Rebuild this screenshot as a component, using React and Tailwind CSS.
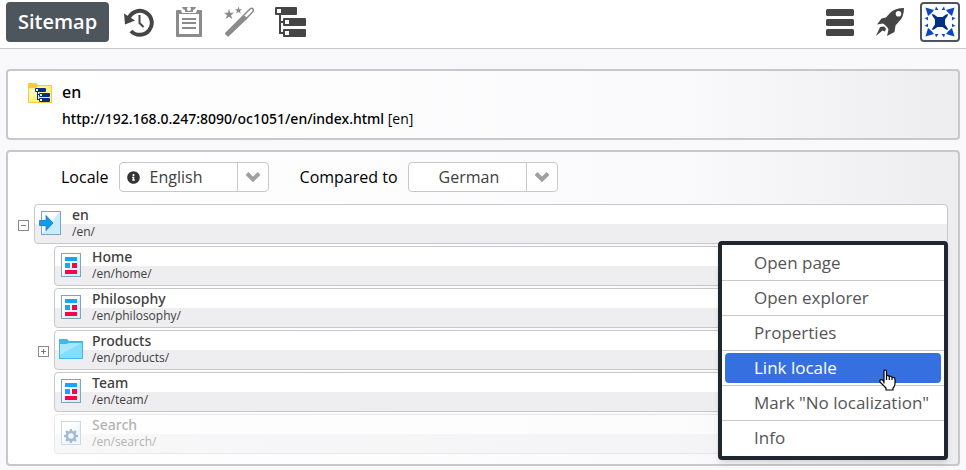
import React from "react";
import { FaInfoCircle } from "react-icons/fa";

function HistoryIcon() {
  return (
    <svg width="30" height="30" viewBox="0 0 30 30" aria-hidden="true">
      <path d="M4.600 11.500A12 12 0 1 1 7 24" fill="none" stroke="#454545" strokeWidth="4" />
      <path d="M0 6.500L11 13.500L1 17.500Z" fill="#454545" />
      <path d="M15.500 8V16L19.500 20" fill="none" stroke="#454545" strokeWidth="2" />
    </svg>
  );
}

function ClipboardIcon() {
  return (
    <svg width="28" height="30" viewBox="0 0 28 30" fill="#8b8b8b" aria-hidden="true">
      <path fillRule="evenodd" d="M2 3H26Q27 3 27 4V29Q27 30 26 30H2Q1 30 1 29V4Q1 3 2 3ZM4 7V27H24V7Z" />
      <path fill="#fff" d="M5 0H23L21 6H7Z" />
      <path d="M7 0H21L20 2L18 3V5H10V3L8 2Z" />
      <circle cx="14" cy="2" r="2" fill="#fff" />
      <path d="M7 11H21V13H7ZM7 15H21V17H7ZM7 20H21V22H7Z" />
    </svg>
  );
}

function WandIcon() {
  return (
    <svg width="30" height="30" viewBox="0 0 30 30" fill="#8b8b8b" aria-hidden="true">
      <path d="M1 26L19 8L23 12L5 29Q4 30 3 29L1 27Z" />
      <path d="M19.500 8.500L26 2Q27.500 0.500 29 2Q30 3.500 28.500 5L22.500 11.500Z" fill="none" stroke="#8b8b8b" strokeWidth="1.500" />
      <path d="M5 2L6.200 5.800H10L7 8.300L8.300 12L5 9.800L1.700 12L3 8.300L0 5.800H3.800Z" />
      <path d="M14.500 -0.500L15.400 2.200H18L16 4L16.800 6.600L14.500 5L12.200 6.600L13 4L11 2.200H13.600Z" />
    </svg>
  );
}

function SitemapIcon() {
  return (
    <svg width="31" height="30" viewBox="0 0 31 30" fill="#454545" aria-hidden="true">
      <path d="M4 7H6V25H9V27H4ZM5 14H9V16H5Z" />
      <rect width="22" height="8" rx="1" />
      <rect x="8" y="11" width="23" height="8" rx="1" />
      <rect x="8" y="22" width="23" height="8" rx="1" />
      <path fill="#fff" d="M2 2H6V6H2ZM10 13H14V17H10ZM10 24H14V28H10Z" />
    </svg>
  );
}

function MenuIcon() {
  return (
    <svg width="28" height="27" viewBox="0 0 28 27" fill="#454545" aria-hidden="true">
      <rect width="28" height="7" rx="1.500" />
      <rect y="10" width="28" height="7" rx="1.500" />
      <rect y="20" width="28" height="7" rx="1.500" />
    </svg>
  );
}

function RocketIcon() {
  return (
    <svg width="28" height="28" viewBox="0 0 28 28" fill="#454545" aria-hidden="true">
      <path
        fillRule="evenodd"
        d="M28 0Q19 0 14 5L10 9.500L5.500 10.500L1 16.500L7 15.500L9 17L11.500 19.500L12.500 21.500L11 28L18.500 24L19.500 17.500L23 13.500Q28 9 28 0ZM22.500 3A2.800 2.800 0 1 1 22.500 8.600A2.800 2.800 0 1 1 22.500 3Z"
      />
      <path d="M4 19L8 18.500L10 20.500L9 23.500L6.500 22.500L0 28Z" />
    </svg>
  );
}

function LogoIcon() {
  return (
    <svg width="34" height="34" viewBox="-17 -17 34 34" fill="#0b49c4" aria-hidden="true">
      {[0, 90, 180, 270].map((angle) => (
        <g key={angle} transform={"rotate(" + angle + ")"}>
          <path d="M-14.500 -14.500L-6 -12L-8 -9.500L-9.500 -8L-12 -6Z" />
          <path d="M-4 -15.500L-1.500 -12L-5 -12ZM4 -15.500L5 -12L1.500 -12Z" />
        </g>
      ))}
      <path fill="#003082" d="M-8 -8L-6 -7.500L-2.500 -5H2.500L6 -7.500L8 -8L7.500 -6L5 -2.500V2.500L7.500 6L8 8L6 7.500L2.500 5H-2.500L-6 7.500L-8 8L-7.500 6L-5 2.500V-2.500L-7.500 -6Z" />
    </svg>
  );
}

function SiteFolderIcon() {
  return (
    <svg width="24" height="20" viewBox="0 0 24 20" aria-hidden="true">
      <path fill="#f9c940" d="M0 0H8L10 2H24V20H0Z" />
      <path fill="#fff08a" d="M1 5H8L10 3H23V19H1Z" />
      <path fill="#fff9b8" d="M1 6H8L10 4H20L1 17Z" />
      <g fill="#003082">
        <rect x="7" y="5" width="11" height="4" rx="1" />
        <rect x="11" y="10" width="11" height="4" rx="1" />
        <rect x="11" y="15" width="11" height="4" rx="1" />
        <path d="M9 8H10V16H12V17H9ZM9 11H12V12H9Z" />
      </g>
      <path fill="#fff9b8" d="M8 6H10V8H8ZM12 11H14V13H12ZM12 16H14V18H12Z" />
    </svg>
  );
}

function Sheet({ children }) {
  return (
    <svg width="24" height="24" viewBox="0 0 24 24" aria-hidden="true">
      <defs>
        <linearGradient id="sheet" x1="0" y1="0" x2="1" y2="1">
          <stop offset="0.4" stopColor="#fff" />
          <stop offset="0.6" stopColor="#d5effb" />
        </linearGradient>
      </defs>
      <rect x="2.500" y="0.500" width="19" height="23" fill="url(#sheet)" stroke="#7fa5b8" />
      {children}
    </svg>
  );
}

function PageIcon() {
  return (
    <Sheet>
      <path fill="#17a5fb" d="M6 4H18V8H6ZM6 10H11V15H6Z" />
      <path fill="#fb0447" d="M13 10H18V15H13ZM6 17H18V21H6Z" />
    </Sheet>
  );
}

function EntryIcon() {
  return (
    <Sheet>
      <path fill="#c9ecfd" d="M3 23L21 1V23Z" />
      <path fill="#109ce8" stroke="#0b7fc6" strokeWidth="0.800" d="M0.500 9.500H7V4.500L14 12L7 19.500V14.500H0.500Z" />
    </Sheet>
  );
}

function FolderIcon() {
  return (
    <svg width="24" height="20" viewBox="0 0 24 20" aria-hidden="true">
      <path fill="#3fb9ea" d="M0 0H8L10 2H24V20H0Z" />
      <path fill="#84defb" d="M1 5H8L10 4H23V19H1Z" />
      <path fill="#a9e8fb" d="M1 5H8L10 4H22L1 16Z" />
    </svg>
  );
}

function GearIcon() {
  return (
    <Sheet>
      <g transform="translate(12 15)">
        <circle r="4" fill="none" stroke="#2b50a0" strokeWidth="2.500" />
        {[0, 45, 90, 135, 180, 225, 270, 315].map((angle) => (
          <path key={angle} transform={"rotate(" + angle + ")"} fill="#2b50a0" d="M-1.500 -4.500L-1 -7H1L1.500 -4.500Z" />
        ))}
      </g>
    </Sheet>
  );
}

function HandPointer() {
  return (
    <svg width="17" height="22" viewBox="0 0 17 22" className="pointer-events-none absolute top-[18px] right-[48px]" aria-hidden="true">
      <path
        fill="#fff"
        stroke="#000"
        strokeWidth="1.200"
        strokeLinejoin="round"
        d="M5 14V2Q5 1 6 1Q7.500 1 7.500 2V7Q9 5.500 10 7.500Q12 6.500 13 8.500Q16 8 16 10.500V15Q15.500 18 14 19V21H7V19L1 13Q0.500 11 2 10.500Q4 11 5 13ZM7.500 7V11M10.300 8V11M13 9V11"
      />
    </svg>
  );
}

function LocaleSelect({ id, label, value, info }) {
  return (
    <div className="flex items-center gap-[10px]">
      <label htmlFor={id}>{label}</label>
      <div className="relative w-[150px]">
        {info && <FaInfoCircle className="pointer-events-none absolute top-[9px] left-2 size-[13px] text-[#333]" />}
        <select
          id={id}
          defaultValue={value}
          className="block h-[30px] w-full appearance-none rounded border border-[#c8c8c8] bg-white pl-[30px] text-[#404040]"
        >
          <option>English</option>
          <option>German</option>
        </select>
        <span className="pointer-events-none absolute inset-y-px right-px flex w-[31px] items-center justify-center border-l border-[#c8c8c8]">
          <svg width="16" height="12" viewBox="0 0 16 12" fill="none" stroke="#a0a0a0" strokeWidth="4" aria-hidden="true">
            <path d="M2 2.500L8 8.500L14 2.500" />
          </svg>
        </span>
      </div>
    </div>
  );
}

function Toggle({ open }) {
  return (
    <button
      type="button"
      aria-label={open ? "Collapse" : "Expand"}
      className="flex size-[11px] shrink-0 items-center justify-center border border-[#8e8888] bg-white"
    >
      <svg width="5" height="5" viewBox="0 0 5 5" fill="#777" aria-hidden="true">
        <path d={open ? "M0 2H5V3H0Z" : "M0 2H2V0H3V2H5V3H3V5H2V3H0Z"} />
      </svg>
    </button>
  );
}

function Entry({ icon, title, path, toggle, faded }) {
  return (
    <div className="flex items-center gap-[5px]">
      <div className="flex w-[11px] shrink-0 pt-[3px]">{toggle && <Toggle open={toggle === "open"} />}</div>
      <div
        className={
          "flex h-10 flex-1 items-center gap-[9px] rounded border border-[#c8c8c8] bg-linear-to-b from-white from-50% to-[#eeeef0] to-50% pl-1 text-[#404040] " +
          (faded ? "opacity-40" : "")
        }
      >
        <div className="flex w-6 justify-center pb-[2px]">{icon}</div>
        <div>
          <div className="font-['Noto_Sans','Open_Sans',sans-serif] text-sm leading-4 font-medium">{title}</div>
          <div className="text-xs leading-[18px]">{path}</div>
        </div>
      </div>
    </div>
  );
}

const children = [
  { title: "Home", path: "/en/home/", icon: <PageIcon /> },
  { title: "Philosophy", path: "/en/philosophy/", icon: <PageIcon /> },
  { title: "Products", path: "/en/products/", icon: <FolderIcon />, toggle: "closed" },
  { title: "Team", path: "/en/team/", icon: <PageIcon /> },
  { title: "Search", path: "/en/search/", icon: <GearIcon />, faded: true },
];

const menuItems = ["Open page", "Open explorer", "Properties", "Link locale", 'Mark "No localization"', "Info"];

const panel = "rounded border-2 border-[#c8c8c8] bg-linear-to-r from-white via-[#fafafc] via-70% to-[#ededef]";

export default function App() {
  return (
    <div className="min-h-screen bg-[#f9f9fc] pb-1 font-['Open_Sans','Noto_Sans',sans-serif] text-base text-black">
      <header className="flex h-[49px] items-start justify-between border-b border-[#c8c8c8] bg-white px-[6px] pt-[2px]">
        <div className="flex h-10 items-center">
          <button type="button" className="h-10 rounded bg-[#4d555d] px-3 text-xl font-semibold text-white">Sitemap</button>
          <nav className="ml-[15px] flex items-center gap-[21px]">
            <button type="button" aria-label="History"><HistoryIcon /></button>
            <button type="button" aria-label="Publish list"><ClipboardIcon /></button>
            <button type="button" aria-label="New element"><WandIcon /></button>
            <button type="button" aria-label="Sitemap view"><SitemapIcon /></button>
          </nav>
        </div>
        <div className="flex items-center gap-4">
          <button type="button" aria-label="Menu" className="mr-[6px]"><MenuIcon /></button>
          <button type="button" aria-label="Launch"><RocketIcon /></button>
          <button type="button" aria-label="Account" className="flex size-10 items-center justify-center rounded border-2 border-[#4d555d]">
            <LogoIcon />
          </button>
        </div>
      </header>

      <main className="flex flex-col gap-[10px] px-[6px] pt-5">
        <section className={"flex gap-[10px] pt-[9px] pb-2 pl-5 " + panel}>
          <div className="pt-[3px]"><SiteFolderIcon /></div>
          <div>
            <h1 className="font-['Noto_Sans','Open_Sans',sans-serif] leading-6 font-medium">en</h1>
            <p className="pt-1 text-sm leading-[22px]">
              <a href="#index" className="font-['Noto_Sans','Open_Sans',sans-serif] font-medium">http://192.168.0.247:8090/oc1051/en/index.html</a> [en]
            </p>
          </div>
        </section>

        <section className={"px-[10px] py-[10px] " + panel}>
          <form className="flex gap-[31px] pb-3 pl-[43px]">
            <LocaleSelect id="locale" label="Locale" value="English" info />
            <LocaleSelect id="compare" label="Compared to" value="German" />
          </form>

          <div className="relative">
            <div className="flex flex-col gap-[2px]">
              <Entry icon={<EntryIcon />} title="en" path="/en/" toggle="open" />
              <div className="flex flex-col gap-[2px] pl-5">
                {children.map((item) => <Entry key={item.title} {...item} />)}
              </div>
            </div>

            <ul className="absolute top-[37px] right-0 w-[230px] divide-y divide-[#c8c8c8] rounded border-4 border-[#20262d] bg-white py-px shadow-md">
              {menuItems.map((item) => {
                const active = item === "Link locale";
                return (
                  <li key={item} className="relative px-[3px] py-[2px]">
                    <button
                      type="button"
                      className={
                        "block h-[30px] w-full rounded pl-[29px] text-left text-[17px] whitespace-nowrap " +
                        (active ? "bg-[#3670e0] text-white" : "text-[#555]")
                      }
                    >
                      {item}
                    </button>
                    {active && <HandPointer />}
                  </li>
                );
              })}
            </ul>
          </div>
        </section>
      </main>
    </div>
  );
}
